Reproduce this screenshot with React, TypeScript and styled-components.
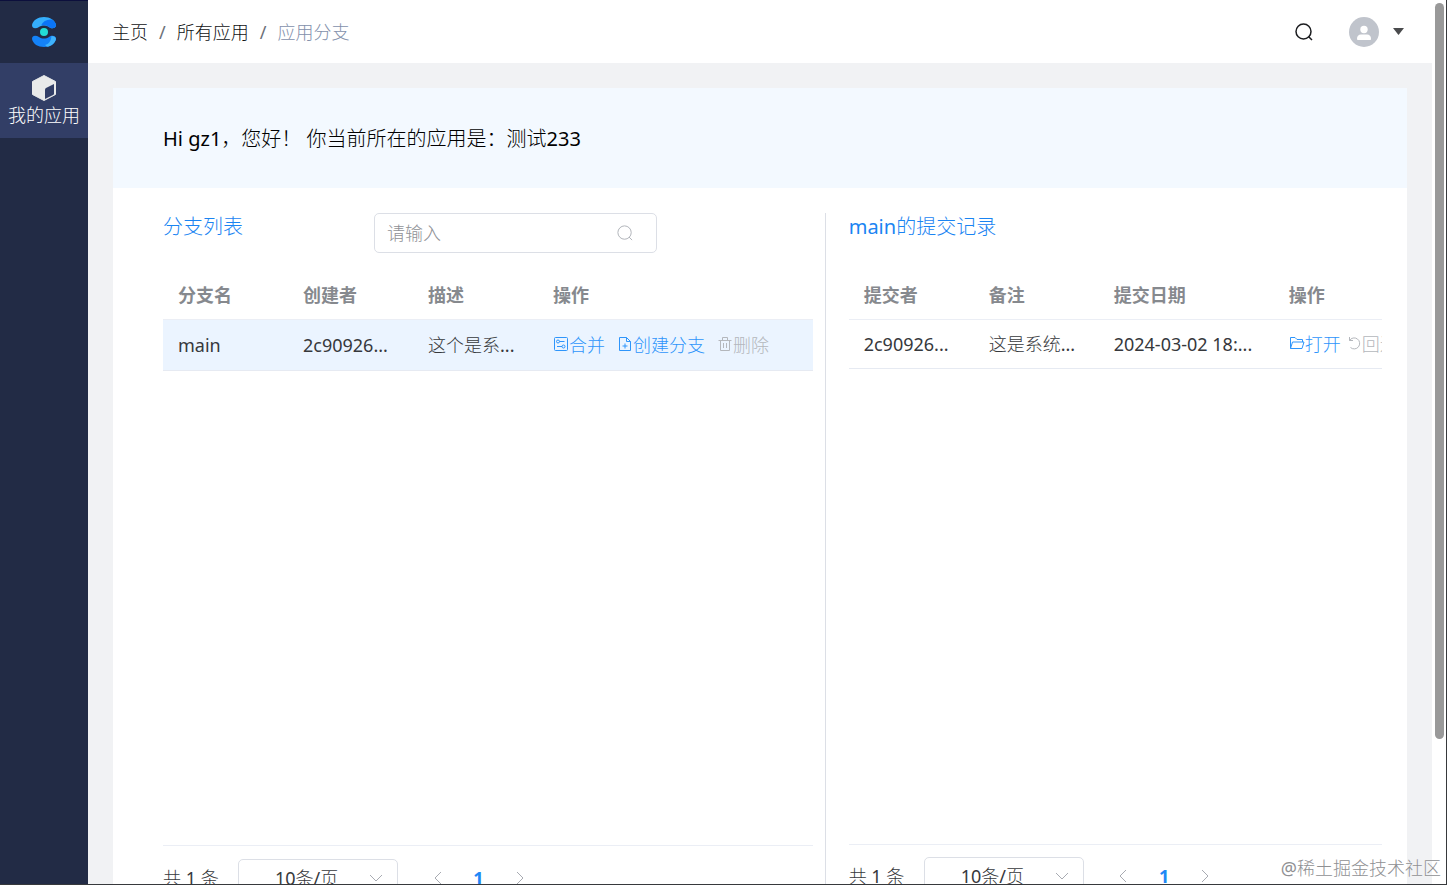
import React from "react";
import styled, { createGlobalStyle } from "styled-components";

const GlobalStyle = createGlobalStyle`
  * { box-sizing: border-box; }
  body {
    margin: 0;
    background: #fff;
    color: #36383c;
    font-family: "Noto Sans", "Noto Sans CJK SC Light", "Noto Sans CJK SC", sans-serif;
    font-size: 18px;
    font-weight: 400;
    line-height: 24px;
  }
  button, input, select { font: inherit; color: inherit; }
  button { border: 0; background: none; padding: 0; cursor: pointer; }
`;

const Shell = styled.div`
  position: relative;
  display: grid;
  grid-template-columns: 88px minmax(0, 1fr) 15px;
  height: 100vh;
  overflow: hidden;
  border-bottom: 1px solid #37393c;
`;

const Sidebar = styled.nav`
  background: #222b45;
  border-top: 1px solid #0c0f3c;
`;

const LogoBox = styled.a`
  display: flex;
  align-items: center;
  justify-content: center;
  height: 62px;
`;

const NavItem = styled.a`
  display: flex;
  flex-direction: column;
  align-items: center;
  height: 75px;
  padding-top: 12px;
  gap: 2px;
  background: #323e66;
  color: #fff;
  text-decoration: none;
  white-space: nowrap;
`;

const Page = styled.div`
  display: flex;
  flex-direction: column;
  min-width: 0;
  height: 100%;
  overflow: hidden;
  background: #f1f2f4;
`;

const Header = styled.header`
  display: flex;
  flex: none;
  align-items: center;
  justify-content: space-between;
  height: 63px;
  padding: 0 28px 0 24px;
  background: #fff;
`;

const Crumbs = styled.nav`
  display: flex;
  gap: 11px;
  color: #6c7078;
`;

const Crumb = styled.a<{ $current?: boolean }>`
  color: ${(p) => (p.$current ? "#8390ab" : "#101114")};
  text-decoration: none;
`;

const HeaderTools = styled.div`
  display: flex;
  align-items: center;
`;

const IconButton = styled.button`
  display: flex;
  align-items: center;
  color: #1c1d20;
`;

const UserButton = styled(IconButton)`
  gap: 14px;
  margin-left: 36px;
`;

const Main = styled.main`
  display: flex;
  flex: 1;
  flex-direction: column;
  padding: 25px 25px 0;
`;

const Banner = styled.section`
  flex: none;
  padding: 37px 50px 35px;
  background: #f3f9ff;
  color: #000;
  font-size: 20px;
  line-height: 28px;
`;

const Panels = styled.div`
  display: grid;
  flex: 1;
  grid-template-columns: 55% 45%;
  padding-top: 25px;
  background: #fff;
`;

const Panel = styled.section<{ $side: "left" | "right" }>`
  min-width: 0;
  padding: ${(p) => (p.$side === "left" ? "0 12px 0 50px" : "0 25px 0 23px")};
  border-left: ${(p) => (p.$side === "left" ? "0" : "1px solid #dcdfe6")};
`;

const PanelTop = styled.div`
  display: flex;
  height: 58px;
`;

const PanelTitle = styled.h2`
  flex: none;
  width: 211px;
  margin: 0;
  color: #1a84f2;
  font-size: 20px;
  font-weight: inherit;
  line-height: 28px;
`;

const SearchField = styled.label`
  display: flex;
  align-items: center;
  width: 283px;
  height: 40px;
  padding: 0 23px 0 12px;
  border: 1px solid #dcdfe6;
  border-radius: 5px;
  color: #a8abb2;
`;

const SearchInput = styled.input`
  flex: 1;
  min-width: 0;
  padding: 0;
  border: 0;
  outline: 0;
  background: transparent;
  &::placeholder { color: #8f9196; opacity: 1; }
`;

const TableArea = styled.div<{ $compact?: boolean }>`
  height: ${(p) => (p.$compact ? 574 : 575)}px;
  overflow: hidden;
  border-bottom: 1px solid #ebeef5;
`;

const Table = styled.table`
  width: 100%;
  min-width: 625px;
  table-layout: fixed;
  border-collapse: separate;
  border-spacing: 0;
`;

const HeadCell = styled.th`
  height: 49px;
  padding: 0 0 0 15px;
  border-bottom: 1px solid #ebeef5;
  color: #86898e;
  font-family: "Noto Sans", "Noto Sans CJK SC", sans-serif;
  font-weight: 700;
  text-align: left;
`;

const Cell = styled.td`
  padding: 0 0 0 15px;
  border-bottom: 1px solid #e6eaf2;
  white-space: nowrap;
`;

const Row = styled.tr<{ $active?: boolean; $compact?: boolean }>`
  height: ${(p) => (p.$compact ? 49 : 51)}px;
  background: ${(p) => (p.$active ? "#ebf4ff" : "#fff")};
`;

const Actions = styled.div<{ $gap: number }>`
  display: flex;
  gap: ${(p) => p.$gap}px;
`;

const Action = styled.button`
  display: flex;
  flex: none;
  align-items: center;
  color: #2e95fb;
  > svg { margin-bottom: 3px; }
  &:disabled { color: #b4b7bc; cursor: default; }
`;

const Pager = styled.div<{ $compact?: boolean }>`
  display: flex;
  align-items: center;
  height: ${(p) => (p.$compact ? 62 : 64)}px;
`;

const Total = styled.span`
  width: 75px;
  white-space: pre;
`;

const SelectBox = styled.label`
  display: grid;
  align-items: center;
  width: 160px;
  height: 38px;
  border: 1px solid #dcdfe6;
  border-radius: 5px;
  > * { grid-area: 1 / 1; }
  > svg { justify-self: end; margin-right: 14px; pointer-events: none; }
`;

const SizeSelect = styled.select`
  width: 100%;
  height: 100%;
  padding: 0 32px 0 36px;
  appearance: none;
  border: 0;
  outline: 0;
  background: transparent;
`;

const PageButton = styled.button<{ $current?: boolean }>`
  display: flex;
  align-items: center;
  justify-content: center;
  width: 41px;
  height: 35px;
  color: ${(p) => (p.$current ? "#1e88f5" : "#a8abb2")};
  font-weight: ${(p) => (p.$current ? 700 : 400)};
`;

const PageButtons = styled.div`
  display: flex;
  margin-left: 19px;
`;

const ScrollTrack = styled.div`
  padding: 3px 2px 0 3px;
  border-right: 1px solid #37393c;
  background: #fff;
`;

const ScrollThumb = styled.div`
  width: 9px;
  height: 83.5%;
  border-radius: 5px;
  background: #999;
`;

const Watermark = styled.div`
  position: absolute;
  right: 6px;
  bottom: 3px;
  color: #8f9093;
  line-height: 26px;
  text-shadow: 0 0 1px #fff;
`;

type IconName = "merge" | "create" | "trash" | "folder" | "undo";

const iconPaths: Record<IconName, React.ReactNode> = {
  merge: (
    <>
      <rect x="1.5" y="1.5" width="13" height="13" rx="1" />
      <circle cx="5" cy="5.5" r="1.5" />
      <path d="M6.5 5.5h5M4 10.5h5" />
      <circle cx="10.5" cy="10.5" r="1.5" />
    </>
  ),
  create: (
    <>
      <path d="M2.5 1.5h7l4 4v9h-11zM9.5 1.5v4h4" />
      <path d="M8 7.5v5M5.5 10h5" />
    </>
  ),
  trash: (
    <path d="M1.5 4.5h13M5.5 4.5v-3h5v3M3.5 4.5v10h9v-10M6.5 7v5M9.5 7v5" />
  ),
  folder: <path d="M1.5 13.5v-11h4.5l2 2h5.5v2.5M1.5 13.5h11.5l2-6.5h-11.5z" />,
  undo: <path d="M3.5 2v3.5h3.5M3.5 5.5a5.5 5.5 0 1 1 1 7" />,
};

const ActionIcon = ({ name }: { name: IconName }) => (
  <svg width="16" height="16" viewBox="0 0 16 16" fill="none" stroke="currentColor" strokeWidth="1" aria-hidden="true">
    {iconPaths[name]}
  </svg>
);

const SearchIcon = ({ size, weight }: { size: number; weight: number }) => (
  <svg width={size} height={size} viewBox="0 0 18 18" fill="none" stroke="currentColor" strokeWidth={weight} aria-hidden="true">
    <circle cx="8.5" cy="8.5" r="7.5" />
    <path d="M13.5 13.5l3.5 3.5" />
  </svg>
);

const Chevron = ({ d }: { d: string }) => (
  <svg width="14" height="14" viewBox="0 0 14 14" fill="none" stroke="#a8abb2" strokeWidth="1" aria-hidden="true">
    <path d={d} />
  </svg>
);

const Logo = () => (
  <svg width="24" height="30" viewBox="0 0 24 30" aria-hidden="true">
    <path fill="#35aefc" d="M0 8C1 3 6 0 12 0s11 3 12 8c0 4-5 4-7 2-3-2-7-2-10 0-3 2-7 2-7-2z" />
    <path fill="#0b74f6" d="M9 8.5C11 4 15 2 20 2.5c2 1.5 4 3.5 4 5.5 0 4-5 4-7 2-2-1.5-5-2-8-1.5z" />
    <path fill="#1482f8" d="M0 22c1 5 6 8 12 8s11-3 12-8c0-4-5-4-7-2-3 2-7 2-10 0-3-2-7-2-7 2z" />
    <path fill="#3fb3fd" d="M13 28c4-1 6-4 6.5-9 2.5 0 4.5 1 4.5 3-1 4-4 7-9 7.8z" />
    <circle cx="12" cy="15" r="4" fill="#22dcd6" />
  </svg>
);

const Cube = () => (
  <svg width="26" height="26" viewBox="0 0 26 26" aria-hidden="true">
    <path fill="#e9eaea" stroke="#e9eaea" strokeLinejoin="round" d="M13 .5l11.5 6v13l-11.5 6-11.5-6v-13z" />
    <path fill="#323e66" d="M14 14.5q0-1 1-1.5l8-4v9.5q0 1-1 1.5l-8 4z" />
  </svg>
);

const Avatar = () => (
  <svg width="30" height="30" viewBox="0 0 30 30" aria-hidden="true">
    <circle cx="15" cy="15" r="15" fill="#c0c4cc" />
    <circle cx="15" cy="12.5" r="3.7" fill="#fff" />
    <path fill="#fff" d="M8 22c0-3 1.5-4.5 4-4.5h6c2.5 0 4 1.5 4 4.5 0 1-1 1-1 1h-12s-1 0-1-1z" />
  </svg>
);

type ActionSpec = { icon: IconName; label: string; disabled?: boolean };

type DataTableProps = {
  columns: { title: string; width?: number }[];
  cells: string[];
  actions: ActionSpec[];
  gap: number;
  active?: boolean;
  compact?: boolean;
};

const DataTable = ({ columns, cells, actions, gap, active, compact }: DataTableProps) => (
  <TableArea $compact={compact}>
    <Table>
      <colgroup>
        {columns.map((c) => (
          <col key={c.title} width={c.width} />
        ))}
      </colgroup>
      <thead>
        <tr>
          {columns.map((c) => (
            <HeadCell key={c.title} scope="col">{c.title}</HeadCell>
          ))}
        </tr>
      </thead>
      <tbody>
        <Row $active={active} $compact={compact}>
          {cells.map((text) => (
            <Cell key={text}>{text}</Cell>
          ))}
          <Cell>
            <Actions $gap={gap}>
              {actions.map((a) => (
                <Action key={a.label} type="button" disabled={a.disabled}>
                  <ActionIcon name={a.icon} />
                  {a.label}
                </Action>
              ))}
            </Actions>
          </Cell>
        </Row>
      </tbody>
    </Table>
  </TableArea>
);

const Pagination = ({ compact }: { compact?: boolean }) => (
  <Pager $compact={compact}>
    <Total>共 1 条</Total>
    <SelectBox>
      <SizeSelect aria-label="每页条数" defaultValue="10">
        <option value="10">10条/页</option>
      </SizeSelect>
      <Chevron d="M1 4l6 6 6-6" />
    </SelectBox>
    <PageButtons>
      <PageButton type="button" aria-label="上一页"><Chevron d="M10 1l-6 6 6 6" /></PageButton>
      <PageButton type="button" $current>1</PageButton>
      <PageButton type="button" aria-label="下一页"><Chevron d="M4 1l6 6-6 6" /></PageButton>
    </PageButtons>
  </Pager>
);

export default function App() {
  return (
    <>
      <GlobalStyle />
      <Shell>
        <Sidebar>
          <LogoBox href="#" aria-label="首页"><Logo /></LogoBox>
          <NavItem href="#apps">
            <Cube />
            我的应用
          </NavItem>
        </Sidebar>
        <Page>
          <Header>
            <Crumbs>
              <Crumb href="#">主页</Crumb>
              <span>/</span>
              <Crumb href="#all">所有应用</Crumb>
              <span>/</span>
              <Crumb href="#branch" $current>应用分支</Crumb>
            </Crumbs>
            <HeaderTools>
              <IconButton type="button" aria-label="搜索"><SearchIcon size={18} weight={1.5} /></IconButton>
              <UserButton type="button" aria-label="用户菜单">
                <Avatar />
                <svg width="11" height="7" viewBox="0 0 11 7" aria-hidden="true">
                  <path fill="#4a4b4d" d="M0 0h11l-5.5 7z" />
                </svg>
              </UserButton>
            </HeaderTools>
          </Header>
          <Main>
            <Banner>Hi gz1，您好！ 你当前所在的应用是：测试233</Banner>
            <Panels>
              <Panel $side="left">
                <PanelTop>
                  <PanelTitle>分支列表</PanelTitle>
                  <SearchField>
                    <SearchInput type="text" placeholder="请输入" aria-label="请输入" />
                    <SearchIcon size={16} weight={1} />
                  </SearchField>
                </PanelTop>
                <DataTable
                  active
                  gap={12}
                  columns={[
                    { title: "分支名", width: 125 },
                    { title: "创建者", width: 125 },
                    { title: "描述", width: 125 },
                    { title: "操作" },
                  ]}
                  cells={["main", "2c90926...", "这个是系..."]}
                  actions={[
                    { icon: "merge", label: "合并" },
                    { icon: "create", label: "创建分支" },
                    { icon: "trash", label: "删除", disabled: true },
                  ]}
                />
                <Pagination />
              </Panel>
              <Panel $side="right">
                <PanelTop>
                  <PanelTitle>main的提交记录</PanelTitle>
                </PanelTop>
                <DataTable
                  compact
                  gap={5}
                  columns={[
                    { title: "提交者", width: 125 },
                    { title: "备注", width: 125 },
                    { title: "提交日期", width: 175 },
                    { title: "操作" },
                  ]}
                  cells={["2c90926...", "这是系统...", "2024-03-02 18:..."]}
                  actions={[
                    { icon: "folder", label: "打开" },
                    { icon: "undo", label: "回退", disabled: true },
                  ]}
                />
                <Pagination compact />
              </Panel>
            </Panels>
          </Main>
        </Page>
        <ScrollTrack>
          <ScrollThumb />
        </ScrollTrack>
        <Watermark>@稀土掘金技术社区</Watermark>
      </Shell>
    </>
  );
}
